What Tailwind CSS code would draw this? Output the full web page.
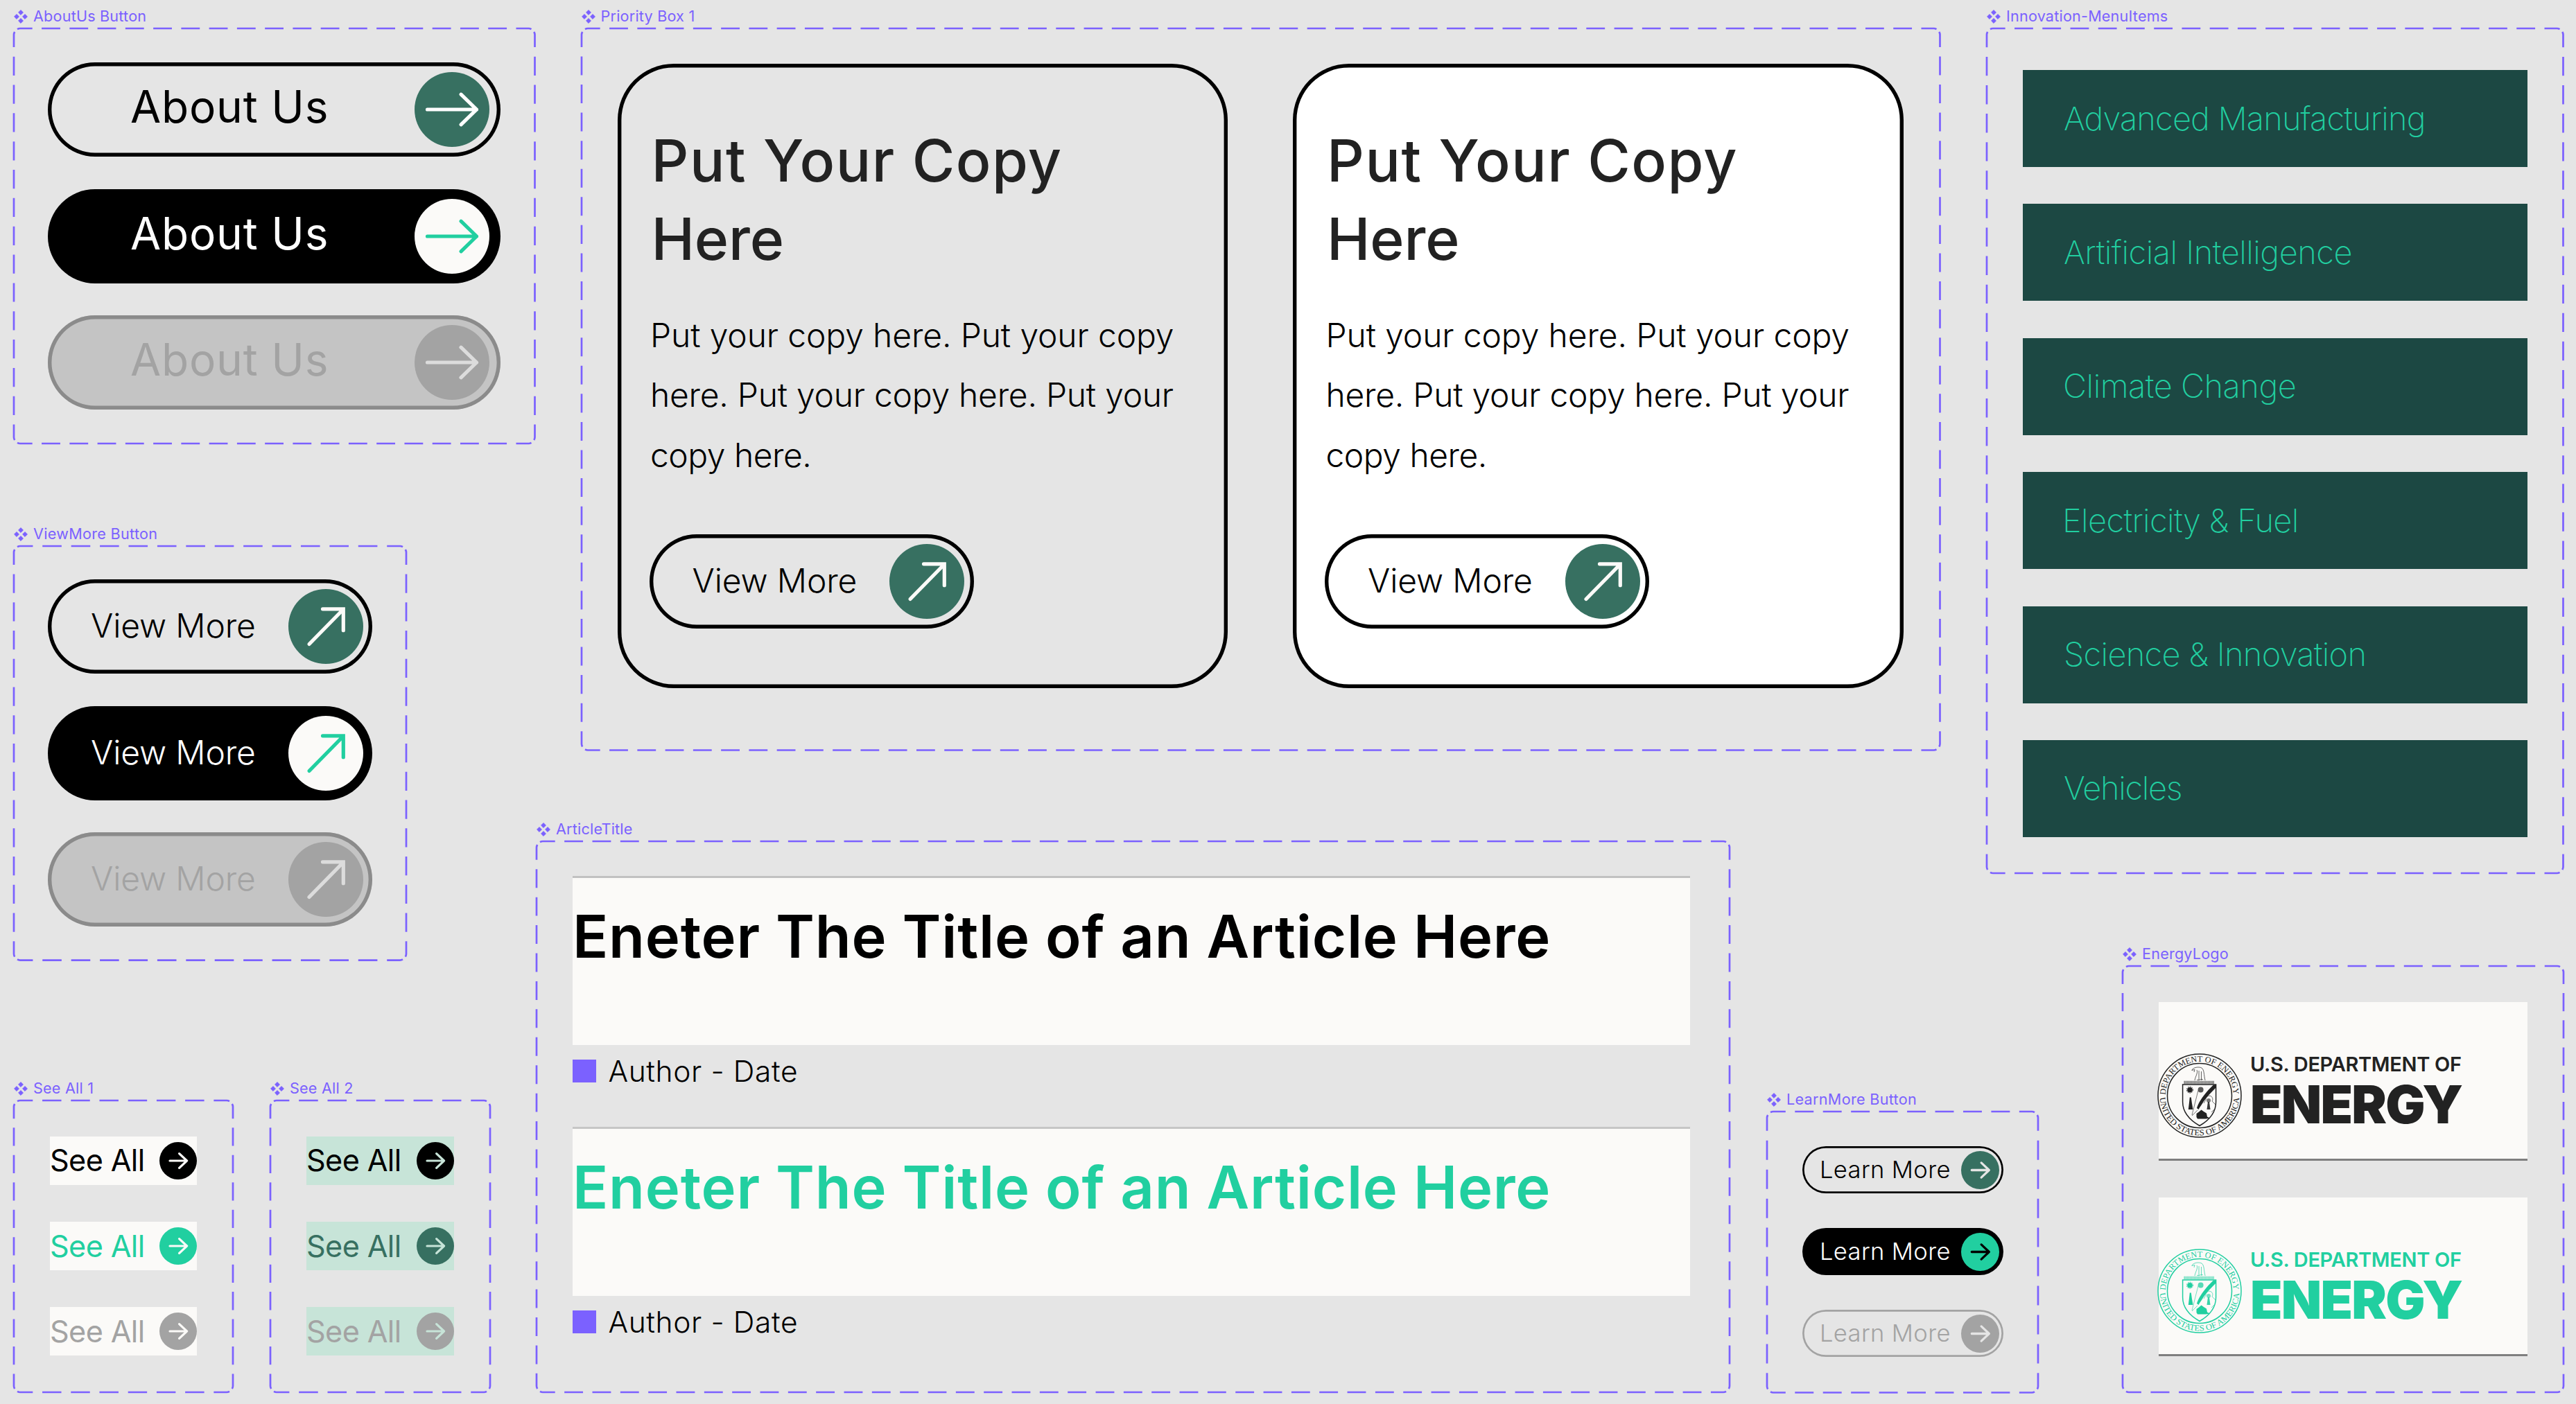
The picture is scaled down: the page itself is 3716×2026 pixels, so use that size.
<!DOCTYPE html>
<html lang="en">
<head>
<meta charset="utf-8">
<title>Component library</title>
<script src="https://cdn.jsdelivr.net/npm/@tailwindcss/browser@4"></script>
</head>
<body class="relative w-[3716px] h-[2026px] overflow-hidden bg-[#e5e5e5] font-['Inter',sans-serif] text-black">

<!-- Shared symbols -->
<svg class="absolute w-0 h-0" aria-hidden="true">
  <symbol id="component" viewBox="0 0 20 20"><path fill="currentColor" stroke="currentColor" stroke-width="1" stroke-linejoin="round" d="M10 .6 13.4 4 10 7.4 6.6 4ZM10 12.6 13.4 16 10 19.4 6.6 16ZM4 6.6 7.4 10 4 13.4 .6 10ZM16 6.6 19.4 10 16 13.4 12.6 10Z"/></symbol>
  <symbol id="arrow-right" viewBox="-54 -54 108 108"><path fill="none" stroke="currentColor" stroke-width="5.2" stroke-linecap="round" stroke-linejoin="round" d="M-35.5 0H35.5M13 -21.8 35.5 0 13 21.8"/></symbol>
  <symbol id="arrow-diag" viewBox="-54 -54 108 108"><path fill="none" stroke="currentColor" stroke-width="5.2" stroke-linecap="round" d="M-24 25.5 25 -24.5M-4.5 -25.2H25.3V5.7"/></symbol>
  <symbol id="arrow-small" viewBox="-27 -27 54 54"><path fill="none" stroke="currentColor" stroke-width="3.2" stroke-linecap="round" stroke-linejoin="round" d="M-12 0H12.6M1.6 -10.4 12.6 0 1.6 10.4"/></symbol>
</svg>

<!-- AboutUs Button -->
<section class="absolute left-[20px] top-[10px]">
  <h2 class="flex h-7 mb-[3px] items-center gap-2 text-[21.6px] leading-none tracking-[0.2px] text-[#7b61ff] whitespace-nowrap"><svg class="size-5"><use href="#component"/></svg>AboutUs Button</h2>
  <div data-frame="751.5 599" class="relative flex flex-col gap-[46.7px] w-[751.5px] h-[599px] pt-[49px] pl-[49px] text-[64px] leading-none tracking-[0.8px] whitespace-nowrap">
    <div class="flex items-center justify-between w-[653px] h-[136px] pl-[119px] pr-[16px] rounded-full inset-ring-[5.4px] inset-ring-black">
      <span class="pb-2">About Us</span>
      <span class="size-[108px] rounded-full bg-[#377061] text-white"><svg class="size-full"><use href="#arrow-right"/></svg></span>
    </div>
    <div class="flex items-center justify-between w-[653px] h-[136px] pl-[119px] pr-[16px] rounded-full bg-black text-white">
      <span class="pb-2">About Us</span>
      <span class="size-[108px] rounded-full bg-[#fbfaf8] text-[#21cfa0]"><svg class="size-full"><use href="#arrow-right"/></svg></span>
    </div>
    <div class="flex items-center justify-between w-[653px] h-[136px] pl-[119px] pr-[16px] rounded-full bg-[#c4c4c4] text-[#a3a3a3] inset-ring-[5.4px] inset-ring-[#8b8b8b]">
      <span class="pb-2">About Us</span>
      <span class="size-[108px] rounded-full bg-[#a3a3a3] text-[#dcdcdc]"><svg class="size-full"><use href="#arrow-right"/></svg></span>
    </div>
  </div>
</section>

<!-- ViewMore Button -->
<section class="absolute left-[20px] top-[757px]">
  <h2 class="flex h-7 mb-[3px] items-center gap-2 text-[21.6px] leading-none tracking-[0.3px] text-[#7b61ff] whitespace-nowrap"><svg class="size-5"><use href="#component"/></svg>ViewMore Button</h2>
  <div data-frame="566 597.6" class="relative flex flex-col gap-[46.7px] w-[566px] h-[597.6px] pt-[48px] pl-[49px] text-[48px] leading-none font-[285] tracking-[-0.15px] whitespace-nowrap">
    <div class="flex items-center justify-between w-[468px] h-[136px] pl-[62px] pr-[13.5px] rounded-full inset-ring-[5.4px] inset-ring-black">
      <span class="pb-0.5">View More</span>
      <span class="size-[108px] rounded-full bg-[#377061] text-[#fbfaf8]"><svg class="size-full"><use href="#arrow-diag"/></svg></span>
    </div>
    <div class="flex items-center justify-between w-[468px] h-[136px] pl-[62px] pr-[13.5px] rounded-full bg-black text-white">
      <span class="pb-0.5">View More</span>
      <span class="size-[108px] rounded-full bg-[#fbfaf8] text-[#21cfa0]"><svg class="size-full"><use href="#arrow-diag"/></svg></span>
    </div>
    <div class="flex items-center justify-between w-[468px] h-[136px] pl-[62px] pr-[13.5px] rounded-full bg-[#c4c4c4] text-[#a3a3a3] inset-ring-[5.4px] inset-ring-[#8b8b8b]">
      <span class="pb-0.5">View More</span>
      <span class="size-[108px] rounded-full bg-[#a3a3a3] text-[#dcdcdc]"><svg class="size-full"><use href="#arrow-diag"/></svg></span>
    </div>
  </div>
</section>

<!-- See All 1 -->
<section class="absolute left-[20px] top-[1557px]">
  <h2 class="flex h-7 mb-[3px] items-center gap-2 text-[21.6px] leading-none tracking-[0.2px] text-[#7b61ff] whitespace-nowrap"><svg class="size-5"><use href="#component"/></svg>See All 1</h2>
  <div data-frame="316 421" class="relative flex flex-col gap-[53.2px] w-[316px] h-[421px] pt-[52px] pl-[52px] text-[43.2px] leading-none tracking-[-0.63px] whitespace-nowrap">
    <div class="flex items-center justify-between w-[212px] h-[70px] bg-[#fbfaf8]">
      <span>See All</span>
      <span class="size-[54px] rounded-full bg-black text-[#fbfaf8]"><svg class="size-full"><use href="#arrow-small"/></svg></span>
    </div>
    <div class="flex items-center justify-between w-[212px] h-[70px] bg-[#fbfaf8] text-[#21cfa0]">
      <span>See All</span>
      <span class="size-[54px] rounded-full bg-[#21cfa0] text-[#fbfaf8]"><svg class="size-full"><use href="#arrow-small"/></svg></span>
    </div>
    <div class="flex items-center justify-between w-[212px] h-[70px] bg-[#fbfaf8] text-[#a3a3a3]">
      <span>See All</span>
      <span class="size-[54px] rounded-full bg-[#a3a3a3] text-[#fbfaf8]"><svg class="size-full"><use href="#arrow-small"/></svg></span>
    </div>
  </div>
</section>

<!-- See All 2 -->
<section class="absolute left-[390px] top-[1557px]">
  <h2 class="flex h-7 mb-[3px] items-center gap-2 text-[21.6px] leading-none tracking-[0.2px] text-[#7b61ff] whitespace-nowrap"><svg class="size-5"><use href="#component"/></svg>See All 2</h2>
  <div data-frame="317 421" class="relative flex flex-col gap-[53.2px] w-[317px] h-[421px] pt-[52px] pl-[52px] text-[43.2px] leading-none tracking-[-0.63px] whitespace-nowrap">
    <div class="flex items-center justify-between w-[213px] h-[70px] bg-[#c7e4d8]">
      <span>See All</span>
      <span class="size-[54px] rounded-full bg-black text-[#c7e4d8]"><svg class="size-full"><use href="#arrow-small"/></svg></span>
    </div>
    <div class="flex items-center justify-between w-[213px] h-[70px] bg-[#c7e4d8] text-[#377061]">
      <span>See All</span>
      <span class="size-[54px] rounded-full bg-[#377061] text-[#c7e4d8]"><svg class="size-full"><use href="#arrow-small"/></svg></span>
    </div>
    <div class="flex items-center justify-between w-[213px] h-[70px] bg-[#c7e4d8] text-[#a3a3a3]">
      <span>See All</span>
      <span class="size-[54px] rounded-full bg-[#a3a3a3] text-[#c7e4d8]"><svg class="size-full"><use href="#arrow-small"/></svg></span>
    </div>
  </div>
</section>

<!-- Priority Box 1 -->
<section class="absolute left-[838.5px] top-[10px]">
  <h2 class="flex h-7 mb-[3px] items-center gap-2 text-[21.6px] leading-none tracking-[0.2px] text-[#7b61ff] whitespace-nowrap"><svg class="size-5"><use href="#component"/></svg>Priority Box 1</h2>
  <div data-frame="1959.5 1041.5" class="relative flex gap-[94px] w-[1959.5px] h-[1041.5px] pt-[51px] pl-[52px] whitespace-nowrap">
    <article class="w-[880.5px] h-[900.5px] pt-[83px] pl-[46px] rounded-[81px] inset-ring-[5.4px] inset-ring-black">
      <h3 class="pl-[3px] text-[84px] leading-[113px] font-[450] text-[#222]"><span class="block tracking-[1.5px]">Put Your Copy</span><span class="block tracking-[-0.2px]">Here</span></h3>
      <p class="mt-[40px] pl-[1.5px] text-[48px] leading-[86.4px] font-[285]">
        <span class="block tracking-[-0.13px]">Put your copy here. Put your copy</span>
        <span class="block tracking-[-0.26px]">here. Put your copy here. Put your</span>
        <span class="block tracking-[-0.5px]">copy here.</span>
      </p>
      <div class="flex items-center justify-between mt-[71px] w-[468px] h-[136px] pl-[62px] pr-[13.5px] rounded-full inset-ring-[5.4px] inset-ring-black text-[48px] leading-none font-[285] tracking-[-0.15px]">
        <span class="pb-0.5">View More</span>
        <span class="size-[108px] rounded-full bg-[#377061] text-[#fbfaf8]"><svg class="size-full"><use href="#arrow-diag"/></svg></span>
      </div>
    </article>
    <article class="w-[880.5px] h-[900.5px] pt-[83px] pl-[46px] rounded-[81px] bg-white inset-ring-[5.4px] inset-ring-black">
      <h3 class="pl-[3px] text-[84px] leading-[113px] font-[450] text-[#222]"><span class="block tracking-[1.5px]">Put Your Copy</span><span class="block tracking-[-0.2px]">Here</span></h3>
      <p class="mt-[40px] pl-[1.5px] text-[48px] leading-[86.4px] font-[285]">
        <span class="block tracking-[-0.13px]">Put your copy here. Put your copy</span>
        <span class="block tracking-[-0.26px]">here. Put your copy here. Put your</span>
        <span class="block tracking-[-0.5px]">copy here.</span>
      </p>
      <div class="flex items-center justify-between mt-[71px] w-[468px] h-[136px] pl-[62px] pr-[13.5px] rounded-full inset-ring-[5.4px] inset-ring-black text-[48px] leading-none font-[285] tracking-[-0.15px]">
        <span class="pb-0.5">View More</span>
        <span class="size-[108px] rounded-full bg-[#377061] text-[#fbfaf8]"><svg class="size-full"><use href="#arrow-diag"/></svg></span>
      </div>
    </article>
  </div>
</section>

<!-- Innovation-MenuItems -->
<section class="absolute left-[2866px] top-[10px]">
  <h2 class="flex h-7 mb-[3px] items-center gap-2 text-[21.6px] leading-none tracking-[0.2px] text-[#7b61ff] whitespace-nowrap"><svg class="size-5"><use href="#component"/></svg>Innovation-MenuItems</h2>
  <ul data-frame="831.5 1219" class="relative flex flex-col gap-[53.4px] w-[831.5px] h-[1219px] pt-[60px] pl-[52px] text-[47px] leading-none font-[250] text-[#21cfa0] whitespace-nowrap">
    <li class="flex items-center w-[727.5px] h-[140px] pb-0.5 pl-[59px] bg-[#1c4843] tracking-[-0.85px]">Advanced Manufacturing</li>
    <li class="flex items-center w-[727.5px] h-[140px] pb-0.5 pl-[59px] bg-[#1c4843] tracking-[-0.5px]">Artificial Intelligence</li>
    <li class="flex items-center w-[727.5px] h-[140px] pb-0.5 pl-[58px] bg-[#1c4843] tracking-[-0.5px]">Climate Change</li>
    <li class="flex items-center w-[727.5px] h-[140px] pb-0.5 pl-[57px] bg-[#1c4843] tracking-[-0.65px]">Electricity &amp; Fuel</li>
    <li class="flex items-center w-[727.5px] h-[140px] pb-0.5 pl-[59px] bg-[#1c4843] tracking-[-0.7px]">Science &amp; Innovation</li>
    <li class="flex items-center w-[727.5px] h-[140px] pb-0.5 pl-[59px] bg-[#1c4843] tracking-[-1.3px]">Vehicles</li>
  </ul>
</section>

<!-- ArticleTitle -->
<section class="absolute left-[774px] top-[1183px]">
  <h2 class="flex h-7 mb-[3px] items-center gap-2 text-[21.6px] leading-none tracking-[0.2px] text-[#7b61ff] whitespace-nowrap"><svg class="size-5"><use href="#component"/></svg>ArticleTitle</h2>
  <div data-frame="1721 795" class="relative flex flex-col gap-[64px] w-[1721px] h-[795px] pt-[50px] pl-[52px] whitespace-nowrap">
    <div class="w-[1611.5px]">
      <div class="h-[243.5px] pt-[34px] border-t-[3px] border-[#c1c1c1] bg-[#fbfaf8] text-[84.8px] leading-[100px] font-semibold tracking-[0.77px]">Eneter The Title of an Article Here</div>
      <div class="flex items-center gap-[18px] mt-[21px] h-[33.5px] text-[42.5px] leading-none font-[285] tracking-[0.6px]"><span class="size-[33.5px] bg-[#7b61ff]"></span><span class="pt-0.5">Author - Date</span></div>
    </div>
    <div class="w-[1611.5px]">
      <div class="h-[243.5px] pt-[34px] border-t-[3px] border-[#c6c6c6] bg-[#fbfaf8] text-[84.8px] leading-[100px] font-semibold tracking-[0.77px] text-[#21cfa0]">Eneter The Title of an Article Here</div>
      <div class="flex items-center gap-[18px] mt-[21px] h-[33.5px] text-[42.5px] leading-none font-[285] tracking-[0.6px]"><span class="size-[33.5px] bg-[#7b61ff]"></span><span class="pt-0.5">Author - Date</span></div>
    </div>
  </div>
</section>

<!-- LearnMore Button -->
<section class="absolute left-[2549px] top-[1572.5px]">
  <h2 class="flex h-7 mb-[3px] items-center gap-2 text-[21.6px] leading-none tracking-[0.3px] text-[#7b61ff] whitespace-nowrap"><svg class="size-5"><use href="#component"/></svg>LearnMore Button</h2>
  <div data-frame="391 405.5" class="relative flex flex-col gap-[50px] w-[391px] h-[405.5px] pt-[50.5px] pl-[50.5px] text-[34.6px] leading-none font-[275] tracking-[0.35px] whitespace-nowrap">
    <div class="flex items-center justify-between w-[290.5px] h-[68px] pl-[25.5px] pr-[6.5px] rounded-full inset-ring-[2.7px] inset-ring-black">
      <span class="pb-0.5">Learn More</span>
      <span class="size-[55px] rounded-full bg-[#377061] text-[#e5e5e5]"><svg class="size-full"><use href="#arrow-small"/></svg></span>
    </div>
    <div class="flex items-center justify-between w-[290.5px] h-[68px] pl-[25.5px] pr-[6.5px] rounded-full bg-black text-white">
      <span class="pb-0.5">Learn More</span>
      <span class="size-[55px] rounded-full bg-[#21cfa0] text-black"><svg class="size-full"><use href="#arrow-small"/></svg></span>
    </div>
    <div class="flex items-center justify-between w-[290.5px] h-[68px] pl-[25.5px] pr-[6.5px] rounded-full text-[#a3a3a3] inset-ring-[2.7px] inset-ring-[#a3a3a3]">
      <span class="pb-0.5">Learn More</span>
      <span class="size-[55px] rounded-full bg-[#a3a3a3] text-[#e5e5e5]"><svg class="size-full"><use href="#arrow-small"/></svg></span>
    </div>
  </div>
</section>

<!-- EnergyLogo -->
<section class="absolute left-[3062px] top-[1363px]">
  <h2 class="flex h-7 mb-[3px] items-center gap-2 text-[21.6px] leading-none tracking-[0.2px] text-[#7b61ff] whitespace-nowrap"><svg class="size-5"><use href="#component"/></svg>EnergyLogo</h2>
  <div data-frame="636 615" class="relative flex flex-col gap-[53px] w-[636px] h-[615px] pt-[52px] pl-[52px] whitespace-nowrap">
    <div class="flex w-[532px] h-[229px] pt-[74px] border-b-3 border-[#7f7f7f] bg-[#fbfaf8] text-[#222]">
      <svg viewBox="0 0 122 122" class="shrink-0 -ml-0.5 size-[122px]">
        <g id="seal">
          <g fill="none" stroke="currentColor">
            <circle cx="61" cy="61" r="60" stroke-width="1.5"/>
            <circle cx="61" cy="61" r="46.5" stroke-width="1.5"/>
            <path id="seal-top" stroke="none" d="M12 61A49 49 0 0 1 110 61"/>
            <path id="seal-bottom" stroke="none" d="M3.6 61A57.4 57.4 0 0 0 118.4 61"/>
            <path stroke-width="1.5" d="M36.6 45H84.6V70C84.6 86 74 97 61 104.5C48 97 36.6 86 36.6 70Z"/>
            <path stroke-width="4.5" stroke-dasharray="1.3 .7" opacity=".7" d="M38.5 42H82.5"/>
            <path stroke-width="1" opacity=".7" d="M50 24C52 20 60 19 64 21C68 24 67 31 69 39M57 24C59 28 55 33 54 39M60 25V39M63.5 26V39M49.5 24.5L54 23.5 53 27M66 38C63 36 60 40 57 38"/>
            <path stroke-width="1" opacity=".6" d="M59 53.5 50 89M50 90 58 82M70 67A5 5 0 1 1 79 69L84 74M70 67 67 72M78 85 82 81"/>
          </g>
          <g fill="currentColor">
            <circle cx="47" cy="52.7" r="3.8"/>
            <circle cx="47" cy="52.7" r="4.6" fill="none" stroke="currentColor" stroke-width="1" stroke-dasharray="1.5 1.5"/>
            <circle cx="62.6" cy="52.5" r="4" opacity=".75"/>
            <path d="M84.5 45.5V49.5C77 57 71 63 66.5 70C64 74 61.5 77.5 59.5 81L57 79C59.5 71 65 63 71 56C75 51 79 47.5 81 45.5Z"/>
            <path d="M46.8 63.5H48.8L49.8 71 51.5 81H44.8L46 71Z"/>
            <path d="M73 70H75L76.5 81H71.5Z" opacity=".9"/>
            <circle cx="74" cy="68" r="3" opacity=".6"/>
            <path d="M63.5 81.5 67 84 71 86.5 72 91.5 76 93.5 70 94.5H58L56.5 92V87L60 84.5Z"/>
          </g>
          <g fill="currentColor" class="font-['Liberation_Serif',serif] text-[12px]">
            <text><textPath href="#seal-top" startOffset="1" textLength="151" lengthAdjust="spacingAndGlyphs">DEPARTMENT OF ENERGY</textPath></text>
            <text><textPath href="#seal-bottom" startOffset="3" textLength="174" lengthAdjust="spacingAndGlyphs">UNITED STATES OF AMERICA</textPath></text>
          </g>
        </g>
      </svg>
      <div class="pl-3 pt-px">
        <div class="text-[29px] leading-[29px] font-semibold tracking-[-0.33px]">U.S. DEPARTMENT OF</div>
        <div class="mt-[5px] text-[76px] leading-[76px] font-black tracking-[-1.8px]">ENERGY</div>
      </div>
    </div>
    <div class="flex w-[532px] h-[229px] pt-[74px] border-b-3 border-[#7f7f7f] bg-[#fbfaf8] text-[#21cfa0]">
      <svg viewBox="0 0 122 122" class="shrink-0 -ml-0.5 size-[122px]"><use href="#seal"/></svg>
      <div class="pl-3 pt-px">
        <div class="text-[29px] leading-[29px] font-semibold tracking-[-0.33px]">U.S. DEPARTMENT OF</div>
        <div class="mt-[5px] text-[76px] leading-[76px] font-black tracking-[-1.8px]">ENERGY</div>
      </div>
    </div>
  </div>
</section>

<script>
// Dashed outline of each component set: whole dashes are fitted to every side,
// and the pattern begins and ends with a dash that bends into the corner.
document.querySelectorAll('[data-frame]').forEach(function (frame) {
  var size = frame.dataset.frame.split(' ').map(Number);
  var w = size[0], h = size[1];
  function side(length, d) {
    var n = Math.round(length / 40.5 - 2 / 3);
    var p = length / (n + 2 / 3);
    return '<path d="' + d + '" stroke-dasharray="' + (p * 2 / 3) + ' ' + (p / 3) + '" stroke-dashoffset="5"/>';
  }
  function horizontal(y, s) {
    return side(w, 'M5 ' + (y + s * 1.2) + 'Q7 ' + y + ' 9 ' + y + 'H' + (w - 9) + 'Q' + (w - 7) + ' ' + y + ' ' + (w - 5) + ' ' + (y + s * 1.2));
  }
  function vertical(x, s) {
    return side(h, 'M' + (x + s * 1.2) + ' 5Q' + x + ' 7 ' + x + ' 9V' + (h - 9) + 'Q' + x + ' ' + (h - 7) + ' ' + (x + s * 1.2) + ' ' + (h - 5));
  }
  frame.insertAdjacentHTML('beforeend',
    '<svg class="absolute left-0 top-0 size-full overflow-visible pointer-events-none" fill="none" stroke="#7b61ff" stroke-width="2.7">' +
    horizontal(0, 1) + horizontal(h, -1) + vertical(0, 1) + vertical(w, -1) + '</svg>');
});
</script>
</body>
</html>
